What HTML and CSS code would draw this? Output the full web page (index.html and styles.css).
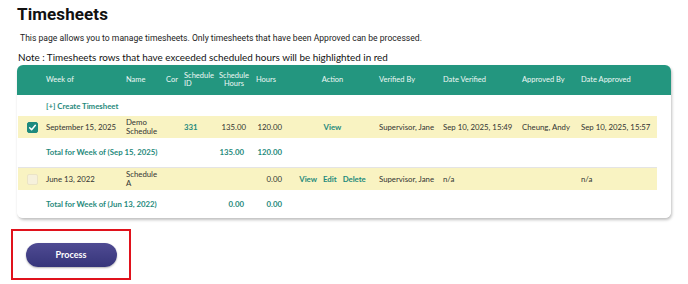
FILE: index.html
```html
<!DOCTYPE html>
<html lang="en">

<head>
    <meta charset="UTF-8">
    <meta name="viewport" content="width=device-width, initial-scale=1.0">
    <title>Timesheets</title>
    <link rel="stylesheet" href="styles.css">
</head>

<body>
    <h1>Timesheets</h1>
    <p class="intro">This page allows you to manage timesheets. Only timesheets that have been Approved can be processed.</p>
    <p class="note">Note : Timesheets rows that have exceeded scheduled hours will be highlighted in red</p>

    <div class="card">
        <table class="sheets">
            <colgroup>
                <col style="width:24px">
                <col style="width:80px">
                <col style="width:40px">
                <col style="width:18px">
                <col style="width:36px">
                <col style="width:36px">
                <col style="width:38px">
                <col style="width:85px">
                <col style="width:64px">
                <col style="width:79px">
                <col style="width:59px">
                <col style="width:80px">
            </colgroup>
            <thead>
                <tr>
                    <th></th>
                    <th>Week of</th>
                    <th>Name</th>
                    <th>Cor</th>
                    <th>Schedule<br>ID</th>
                    <th class="center">Schedule<br>Hours</th>
                    <th>Hours</th>
                    <th class="center">Action</th>
                    <th>Verified By</th>
                    <th>Date Verified</th>
                    <th>Approved By</th>
                    <th>Date Approved</th>
                </tr>
            </thead>
            <tbody>
                <tr class="create">
                    <td></td>
                    <td colspan="11"><a href="#">[+] Create Timesheet</a></td>
                </tr>
                <tr class="entry">
                    <td class="check"><span class="box checked"><svg viewBox="0 0 12 12" width="9" height="9"><path d="M2.2 6.4 L4.8 9 L9.8 3" fill="none" stroke="#fff" stroke-width="2" stroke-linecap="round" stroke-linejoin="round"/></svg></span></td>
                    <td>September 15, 2025</td>
                    <td class="name">Demo<br>Schedule</td>
                    <td></td>
                    <td class="link">331</td>
                    <td class="num">135.00</td>
                    <td class="num">120.00</td>
                    <td class="center"><a href="#">View</a></td>
                    <td>Supervisor, Jane</td>
                    <td>Sep 10, 2025, 15:49</td>
                    <td>Cheung, Andy</td>
                    <td>Sep 10, 2025, 15:57</td>
                </tr>
                <tr class="total">
                    <td></td>
                    <td colspan="4">Total for Week of (Sep 15, 2025)</td>
                    <td class="num">135.00</td>
                    <td class="num">120.00</td>
                    <td colspan="5"></td>
                </tr>
                <tr class="entry">
                    <td class="check"><span class="box"></span></td>
                    <td>June 13, 2022</td>
                    <td class="name">Schedule<br>A</td>
                    <td></td>
                    <td></td>
                    <td></td>
                    <td class="num">0.00</td>
                    <td class="center actions"><a href="#">View</a><a href="#">Edit</a><a href="#">Delete</a></td>
                    <td>Supervisor, Jane</td>
                    <td>n/a</td>
                    <td></td>
                    <td>n/a</td>
                </tr>
                <tr class="total">
                    <td></td>
                    <td colspan="4">Total for Week of (Jun 13, 2022)</td>
                    <td class="num">0.00</td>
                    <td class="num">0.00</td>
                    <td colspan="5"></td>
                </tr>
            </tbody>
        </table>
    </div>

    <div class="process-box">
        <button class="process">Process</button>
    </div>
</body>

</html>
```

FILE: styles.css
```css
body {
    font-family: Roboto, "Liberation Sans", sans-serif;
    margin: 0;
    padding: 0 17px;
    color: #111;
}

h1 {
    font-size: 17px;
    font-weight: 700;
    margin: 0;
    padding-top: 4px;
    line-height: 20px;
    letter-spacing: 0.1px;
}

.intro {
    font-size: 8.6px;
    margin: 8px 0 0 3px;
    line-height: 12px;
    color: #222;
}

.note {
    font-family: Lato, "Noto Sans", sans-serif;
    font-size: 9.9px;
    margin: 6px 0 0 1px;
    line-height: 14px;
    color: #111;
}

.card {
    margin-top: 1px;
    width: 654px;
    height: 153px;
    border-radius: 6px;
    background: linear-gradient(#23967f 0 30px, #fff 30px);
    box-shadow: 1px 2px 3px rgba(0, 0, 0, 0.25);
    font-family: Lato, "Noto Sans", sans-serif;
    font-size: 7.8px;
    color: #333;
}

.sheets {
    border-collapse: collapse;
    table-layout: fixed;
    width: 639px;
    margin-left: 1px;
}

.sheets th {
    color: #eef8f5;
    font-weight: 400;
    font-size: 7.5px;
    line-height: 8px;
    text-align: left;
    padding: 0 0 0 4px;
    height: 30px;
    white-space: nowrap;
}

.sheets td {
    padding: 0 0 0 4px;
    line-height: 9px;
    white-space: nowrap;
}

.sheets .center {
    text-align: center;
    padding-left: 0;
}

.sheets .num {
    text-align: right;
    padding: 0 8px 0 0;
}

.sheets tr > .num:nth-child(6) {
    padding-right: 6px;
}

.sheets a {
    color: #1f8a7c;
    text-decoration: none;
    font-weight: 700;
}

.create td {
    height: 19px;
    padding-top: 2px;
}

.entry td {
    background: #f9f3c2;
    height: 22px;
}

.entry + .total + .entry td {
    border-top: 1px solid #e4e4e4;
}

.entry .name {
    line-height: 9px;
}

.link {
    color: #1f8a7c;
    font-weight: 700;
}

.actions a {
    margin: 0 3px;
}

.total td {
    height: 29px;
    color: #1f8a7c;
    font-weight: 700;
}

.check {
    text-align: center;
}

.box {
    display: inline-block;
    width: 11px;
    height: 11px;
    border-radius: 2px;
    background: #f6f1dc;
    border: 1px solid #ebe4c6;
    box-sizing: border-box;
    vertical-align: middle;
}

.box.checked {
    background: #1e8a7e;
    border-color: #1e8a7e;
}

.box svg {
    display: block;
    margin: 0 auto;
}

.process-box {
    margin: 11px 0 0 -6px;
    width: 116px;
    height: 47px;
    border: 2px solid #e0121c;
    display: flex;
    align-items: center;
    justify-content: center;
}

.process {
    width: 91px;
    height: 24px;
    border: none;
    border-radius: 12px;
    background: linear-gradient(#4f4b93, #36357a);
    color: #fff;
    font-family: Lato, "Noto Sans", sans-serif;
    font-weight: 700;
    font-size: 9px;
    cursor: pointer;
    box-shadow: 0 1px 2px rgba(0, 0, 0, 0.3);
}
```
